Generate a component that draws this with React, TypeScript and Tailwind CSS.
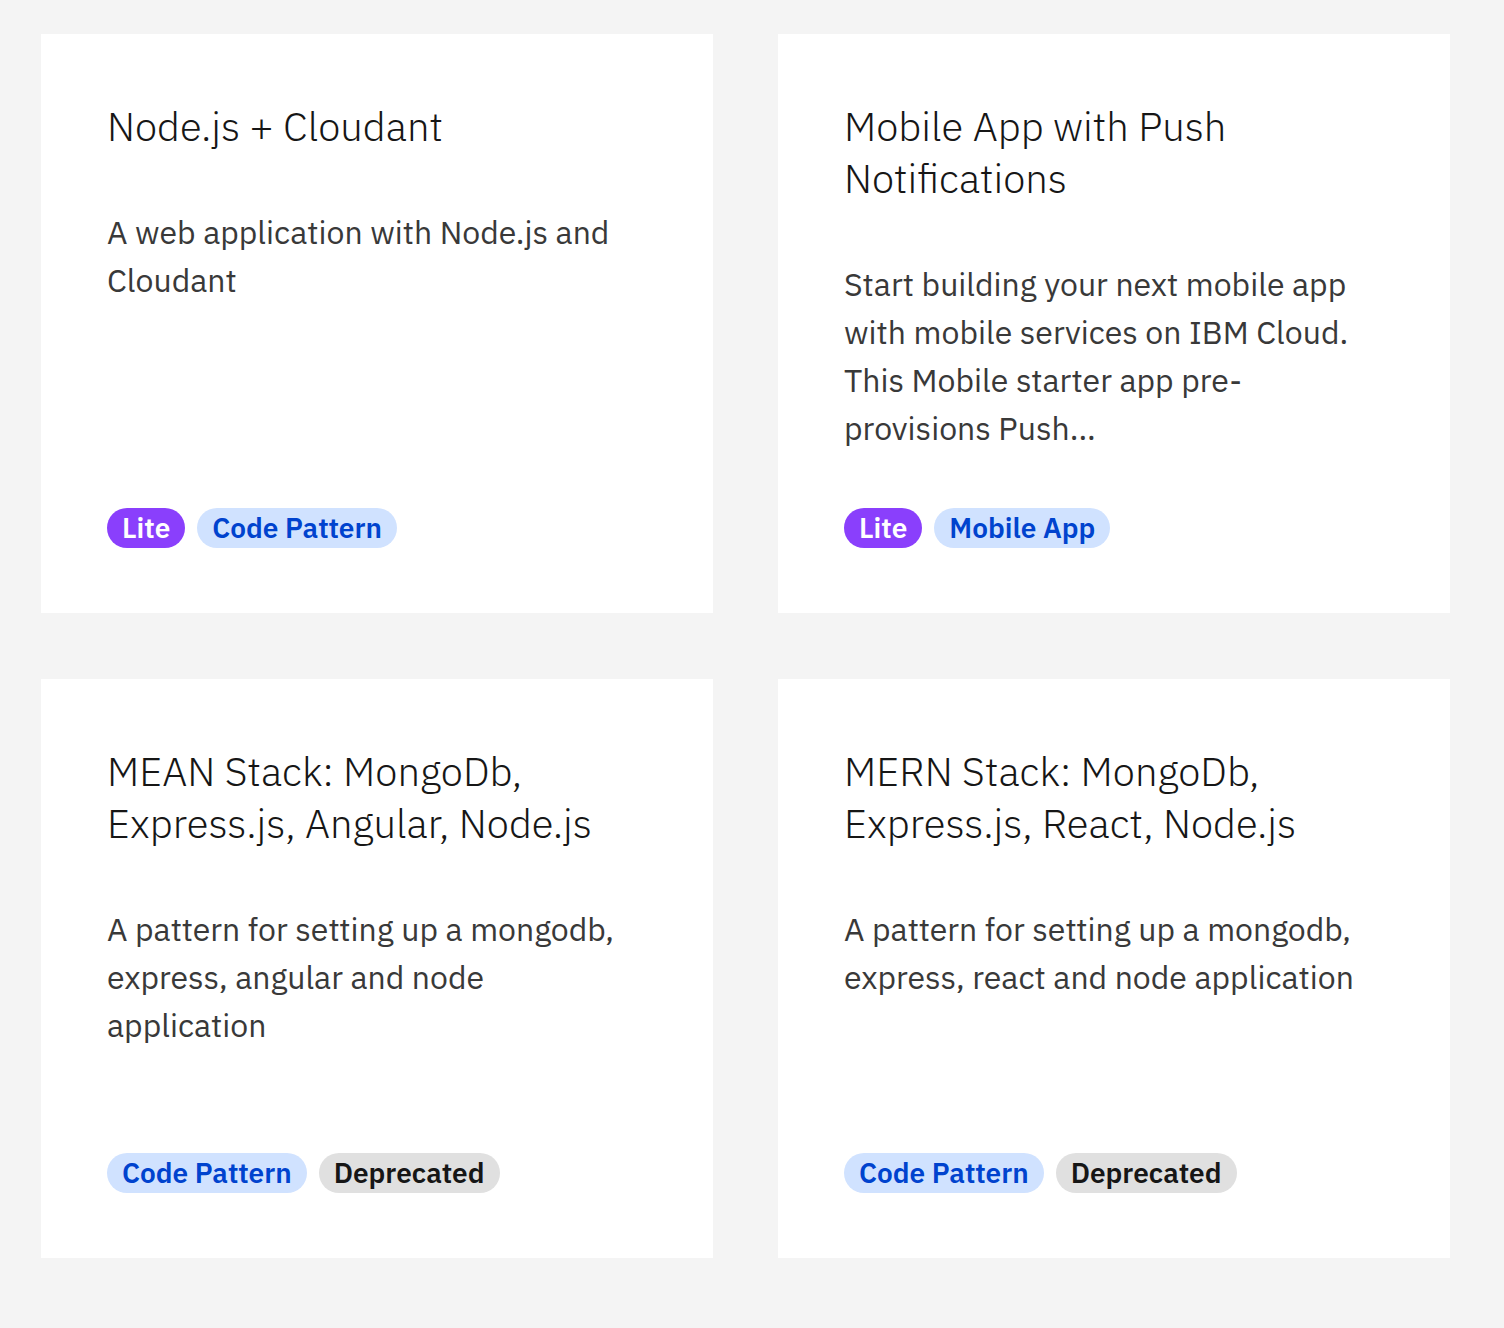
import React from "react";

type Tag = { label: string; kind: "lite" | "blue" | "gray" };

type Card = {
  title: string;
  description: string;
  tags: Tag[];
};

const cards: Card[] = [
  {
    title: "Node.js + Cloudant",
    description: "A web application with Node.js and Cloudant",
    tags: [
      { label: "Lite", kind: "lite" },
      { label: "Code Pattern", kind: "blue" },
    ],
  },
  {
    title: "Mobile App with Push Notifications",
    description:
      "Start building your next mobile app with mobile services on IBM Cloud. This Mobile starter app pre-provisions Push...",
    tags: [
      { label: "Lite", kind: "lite" },
      { label: "Mobile App", kind: "blue" },
    ],
  },
  {
    title: "MEAN Stack: MongoDb, Express.js, Angular, Node.js",
    description:
      "A pattern for setting up a mongodb, express, angular and node application",
    tags: [
      { label: "Code Pattern", kind: "blue" },
      { label: "Deprecated", kind: "gray" },
    ],
  },
  {
    title: "MERN Stack: MongoDb, Express.js, React, Node.js",
    description:
      "A pattern for setting up a mongodb, express, react and node application",
    tags: [
      { label: "Code Pattern", kind: "blue" },
      { label: "Deprecated", kind: "gray" },
    ],
  },
];

const tagStyles: Record<Tag["kind"], string> = {
  lite: "bg-[#8a3ffc] text-white",
  blue: "bg-[#d0e2ff] text-[#0043ce]",
  gray: "bg-[#e0e0e0] text-[#161616]",
};

const TagPill: React.FC<{ tag: Tag }> = ({ tag }) => (
  <span
    className={`inline-flex h-10 items-center rounded-full px-[15px] text-[28px] font-semibold leading-none ${tagStyles[tag.kind]}`}
  >
    {tag.label}
  </span>
);

const App: React.FC = () => {
  return (
    <div
      className="min-h-[1328px] w-full bg-[#f4f4f4] pl-[41px] pr-[54px] pt-[34px] pb-[69px]"
      style={{ fontFamily: '"IBM Plex Sans", Inter, "Noto Sans", sans-serif' }}
    >
      <div className="grid grid-cols-2 gap-x-[65px] gap-y-[66px]">
        {cards.map((card) => (
          <div
            key={card.title}
            className="flex h-[579px] flex-col bg-white pl-[66px] pr-[67px] pt-[66px] pb-[65px]"
          >
            <h2 className="mb-[56px] text-[40px] font-light leading-[52px] text-[#161616]">
              {card.title}
            </h2>
            <p className="text-[32px] leading-[48px] text-[#393939]">
              {card.description}
            </p>
            <div className="mt-auto flex gap-3">
              {card.tags.map((tag) => (
                <TagPill key={tag.label} tag={tag} />
              ))}
            </div>
          </div>
        ))}
      </div>
    </div>
  );
};

export default App;
